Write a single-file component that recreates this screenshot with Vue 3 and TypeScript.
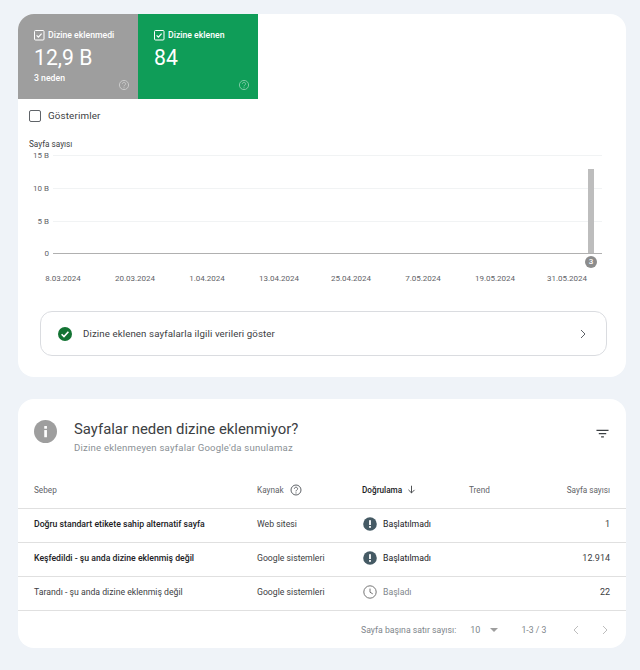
<template>
  <div class="page">
    <section class="card overview">
      <div class="tiles">
        <div v-for="tile in tiles" :key="tile.label" class="tile" :class="tile.tone">
          <div class="tile-label">
            <svg class="tile-check" viewBox="0 0 12 12" width="12" height="12">
              <rect x="1.5" y="1.5" width="9.5" height="9.5" rx="1" fill="none" stroke="#fff" stroke-width="1" />
              <path d="M3.6 6.4l1.8 1.8 3.2-3.6" fill="none" stroke="#fff" stroke-width="1.2" />
            </svg>
            <span>{{ tile.label }}</span>
          </div>
          <div class="tile-value">{{ tile.value }}</div>
          <div class="tile-sub">{{ tile.sub }}</div>
          <svg class="tile-help" viewBox="0 0 12 12" width="12" height="12">
            <circle cx="6" cy="6" r="4.6" fill="none" stroke="#fff" stroke-width="1" />
            <path d="M4.4 4.9c0-2.1 3.2-2.1 3.2 0 0 1.2-1.6 1.2-1.6 2.5" fill="none" stroke="#fff" stroke-width="1" />
            <circle cx="6" cy="8.8" r=".6" fill="#fff" />
          </svg>
        </div>
      </div>

      <label class="impressions">
        <span class="box"></span>
        <span>Gösterimler</span>
      </label>

      <div class="chart">
        <div class="chart-title">Sayfa sayısı</div>
        <div class="plot">
          <div v-for="(tick, i) in ticks" :key="tick" class="tick" :class="{ base: i === ticks.length - 1 }">
            <span class="tick-label">{{ tick }}</span>
            <span class="tick-line"></span>
          </div>
          <div class="bar"></div>
          <div class="badge">3</div>
        </div>
        <div class="dates">
          <span v-for="date in dates" :key="date">{{ date }}</span>
        </div>
      </div>

      <div class="link-row">
        <svg viewBox="0 0 16 16" width="16" height="16">
          <circle cx="8" cy="8" r="7" fill="#137333" />
          <path d="M4.6 8.2l2.4 2.4 4.4-4.8" fill="none" stroke="#fff" stroke-width="1.6" />
        </svg>
        <span class="link-text">Dizine eklenen sayfalarla ilgili verileri göster</span>
        <svg class="link-arrow" viewBox="0 0 10 12" width="10" height="12">
          <path d="M3 2l4 4-4 4" fill="none" stroke="#5f6368" stroke-width="1" />
        </svg>
      </div>
    </section>

    <section class="card reasons">
      <header class="reasons-head">
        <svg viewBox="0 0 24 24" width="23" height="23">
          <circle cx="12" cy="12" r="12" fill="#9e9e9e" />
          <rect x="10.7" y="10.5" width="2.8" height="7.5" fill="#fff" />
          <rect x="10.7" y="6.3" width="2.8" height="2.8" fill="#fff" />
        </svg>
        <div class="head-text">
          <h2>Sayfalar neden dizine eklenmiyor?</h2>
          <p>Dizine eklenmeyen sayfalar Google'da sunulamaz</p>
        </div>
        <svg class="filter" viewBox="0 0 14 10" width="13" height="10">
          <path d="M.5 1h13M3 4.5h8M5.5 8h3" fill="none" stroke="#3c4043" stroke-width="1.3" />
        </svg>
      </header>

      <div class="row heading">
        <span>Sebep</span>
        <span class="with-icon">
          Kaynak
          <svg viewBox="0 0 12 12" width="12" height="12">
            <circle cx="6" cy="6" r="5" fill="none" stroke="#5f6368" stroke-width="1" />
            <path d="M4.4 4.8c0-2.1 3.2-2.1 3.2 0 0 1.2-1.6 1.2-1.6 2.6" fill="none" stroke="#5f6368" stroke-width="1" />
            <circle cx="6" cy="8.9" r=".6" fill="#5f6368" />
          </svg>
        </span>
        <span class="sorted">
          Doğrulama
          <svg viewBox="0 0 10 10" width="9" height="9">
            <path d="M5 .8v8M1.6 5.4L5 8.8l3.4-3.4" fill="none" stroke="#3c4043" stroke-width="1" />
          </svg>
        </span>
        <span>Trend</span>
        <span class="num">Sayfa sayısı</span>
      </div>

      <div v-for="row in rows" :key="row.reason" class="row body">
        <span class="reason" :class="{ strong: row.status === 'idle' }">{{ row.reason }}</span>
        <span class="source">{{ row.source }}</span>
        <span class="status" :class="row.status">
          <svg v-if="row.status === 'idle'" viewBox="0 0 14 14" width="14" height="14">
            <circle cx="7" cy="7" r="6.8" fill="#455a64" />
            <rect x="6.1" y="3.2" width="1.8" height="4.8" fill="#fff" />
            <rect x="6.1" y="9" width="1.8" height="1.8" fill="#fff" />
          </svg>
          <svg v-else viewBox="0 0 14 14" width="14" height="14">
            <circle cx="7" cy="7" r="6.2" fill="none" stroke="#757575" stroke-width="1" />
            <path d="M7 3.6v3.6l2.8 1.7" fill="none" stroke="#757575" stroke-width="1" />
          </svg>
          {{ row.statusText }}
        </span>
        <span></span>
        <span class="num count">{{ row.count }}</span>
      </div>

      <footer class="pager">
        <span class="pager-label">Sayfa başına satır sayısı:</span>
        <span class="pager-size">10</span>
        <span class="caret"></span>
        <span class="pager-range">1-3 / 3</span>
        <svg viewBox="0 0 10 12" width="10" height="12">
          <path d="M7 2L3 6l4 4" fill="none" stroke="#bdbdbd" stroke-width="1" />
        </svg>
        <svg viewBox="0 0 10 12" width="10" height="12">
          <path d="M3 2l4 4-4 4" fill="none" stroke="#bdbdbd" stroke-width="1" />
        </svg>
      </footer>
    </section>
  </div>
</template>

<script setup lang="ts">
interface Row {
  reason: string;
  source: string;
  status: 'idle' | 'started';
  statusText: string;
  count: string;
}

const tiles = [
  { label: 'Dizine eklenmedi', value: '12,9 B', sub: '3 neden', tone: 'gray' },
  { label: 'Dizine eklenen', value: '84', sub: '', tone: 'green' }
];

const ticks = ['15 B', '10 B', '5 B', '0'];

const dates = [
  '8.03.2024',
  '20.03.2024',
  '1.04.2024',
  '13.04.2024',
  '25.04.2024',
  '7.05.2024',
  '19.05.2024',
  '31.05.2024'
];

const rows: Row[] = [
  {
    reason: 'Doğru standart etikete sahip alternatif sayfa',
    source: 'Web sitesi',
    status: 'idle',
    statusText: 'Başlatılmadı',
    count: '1'
  },
  {
    reason: 'Keşfedildi - şu anda dizine eklenmiş değil',
    source: 'Google sistemleri',
    status: 'idle',
    statusText: 'Başlatılmadı',
    count: '12.914'
  },
  {
    reason: 'Tarandı - şu anda dizine eklenmiş değil',
    source: 'Google sistemleri',
    status: 'started',
    statusText: 'Başladı',
    count: '22'
  }
];
</script>

<style>
html,
body {
  background: #eff3f8;
}
</style>

<style scoped>
.page {
  width: 640px;
  height: 670px;
  box-sizing: border-box;
  padding: 14px 14px 0 18px;
  display: flex;
  flex-direction: column;
  gap: 22px;
  font-family: Roboto, "Liberation Sans", sans-serif;
  color: #202124;
  overflow: hidden;
}

.card {
  background: #fff;
  border-radius: 16px;
  overflow: hidden;
}

.overview {
  height: 363px;
}

.tiles {
  display: flex;
}

.tile {
  position: relative;
  width: 120px;
  height: 85px;
  box-sizing: border-box;
  padding: 15px 0 0 15px;
  color: #fff;
}

.tile.gray {
  background: #9e9e9e;
}

.tile.green {
  background: #0f9d58;
}

.tile-label {
  display: flex;
  align-items: center;
  gap: 3px;
  font-size: 8.7px;
  font-weight: 500;
  line-height: 12px;
}

.tile-value {
  margin: 5px 0 0 1px;
  font-size: 21.2px;
  line-height: 24px;
}

.tile-sub {
  margin: 2px 0 0 1px;
  font-size: 8.7px;
  font-weight: 500;
  line-height: 12px;
}

.tile-help {
  position: absolute;
  right: 8px;
  bottom: 8px;
  opacity: 0.45;
}

.impressions {
  display: flex;
  align-items: center;
  gap: 7px;
  margin: 10px 0 0 11px;
  font-size: 9.8px;
  letter-spacing: 0.15px;
  line-height: 14px;
  color: #3c4043;
}

.box {
  width: 10px;
  height: 10px;
  border: 1px solid #5f6368;
  border-radius: 2px;
}

.chart {
  margin: 16px 0 0 11px;
}

.chart-title {
  font-size: 8.2px;
  line-height: 10px;
  color: #3c4043;
}

.plot {
  position: relative;
  margin-top: 6px;
  height: 98px;
  display: flex;
  flex-direction: column;
}

.tick {
  display: flex;
  align-items: flex-start;
  height: 33px;
}

.tick.base {
  height: 0;
  margin-top: -1px;
}

.tick-label {
  width: 20px;
  margin-top: -5px;
  line-height: 11px;
  text-align: right;
  font-size: 8px;
  color: #5f6368;
}

.tick-line {
  width: 549px;
  height: 1px;
  margin-left: 4px;
  background: #f1f3f4;
}

.base .tick-line {
  background: #b0b0b0;
}

.bar {
  position: absolute;
  left: 559px;
  bottom: 0;
  width: 6px;
  height: 84px;
  background: #bdbdbd;
}

.badge {
  position: absolute;
  left: 556px;
  top: 101px;
  width: 12px;
  height: 12px;
  border-radius: 50%;
  background: #8c8c8c;
  color: #fff;
  font-size: 8px;
  font-weight: 500;
  line-height: 12px;
  text-align: center;
}

.dates {
  display: grid;
  grid-template-columns: repeat(8, 72px);
  margin: 20px 0 0 -2px;
  font-size: 8px;
  line-height: 12px;
  color: #5f6368;
  text-align: center;
}

.link-row {
  display: flex;
  align-items: center;
  margin: 26px 19px 0 22px;
  height: 43px;
  padding: 0 18px 0 16px;
  border: 1px solid #dadce0;
  border-radius: 12px;
}

.link-text {
  margin-left: 10px;
  font-size: 9.7px;
  letter-spacing: 0.1px;
  color: #3c4043;
}

.link-arrow {
  margin-left: auto;
}

.reasons {
  height: 249px;
  display: flex;
  flex-direction: column;
}

.reasons-head {
  display: flex;
  align-items: flex-start;
  padding: 21px 17px 0 16px;
  height: 58px;
}

.head-text {
  margin-left: 17px;
}

.head-text h2 {
  margin: -1px 0 0;
  font-size: 14.9px;
  font-weight: 400;
  line-height: 20px;
  color: #3c4043;
}

.head-text p {
  margin: 2px 0 0;
  font-size: 9.6px;
  letter-spacing: 0.2px;
  line-height: 14px;
  color: #8a9095;
}

.filter {
  margin: 9px 0 0 auto;
}

.row {
  display: grid;
  grid-template-columns: 223px 105px 107px 1fr auto;
  align-items: center;
  padding: 0 16px;
  border-bottom: 1px solid #e0e0e0;
  font-size: 8.7px;
}

.heading {
  height: 23px;
  padding-bottom: 7px;
  font-size: 8.2px;
  color: #5f6368;
}

.with-icon,
.sorted {
  display: flex;
  align-items: center;
  gap: 6px;
}

.sorted {
  gap: 5px;
  color: #202124;
  font-weight: 500;
}

.body {
  height: 30px;
  padding-bottom: 3px;
  color: #3c4043;
}

.reason {
  color: #3c4043;
}

.reason.strong {
  color: #202124;
  font-weight: 500;
}

.status {
  display: flex;
  align-items: center;
  gap: 6px;
  padding-left: 1px;
  color: #202124;
}

.status.started {
  color: #80868b;
}

.count {
  font-size: 9px;
}

.num {
  text-align: right;
}

.pager {
  display: flex;
  align-items: center;
  height: 37px;
  padding-left: 343px;
  font-size: 8.7px;
  color: #80868b;
}

.pager-size {
  margin-left: 14px;
  font-size: 9px;
}

.caret {
  margin-left: 10px;
  border-top: 4px solid #9e9e9e;
  border-left: 4px solid transparent;
  border-right: 4px solid transparent;
}

.pager-range {
  margin: 0 25px 0 23px;
}

.pager svg + svg {
  margin-left: 19px;
}
</style>
